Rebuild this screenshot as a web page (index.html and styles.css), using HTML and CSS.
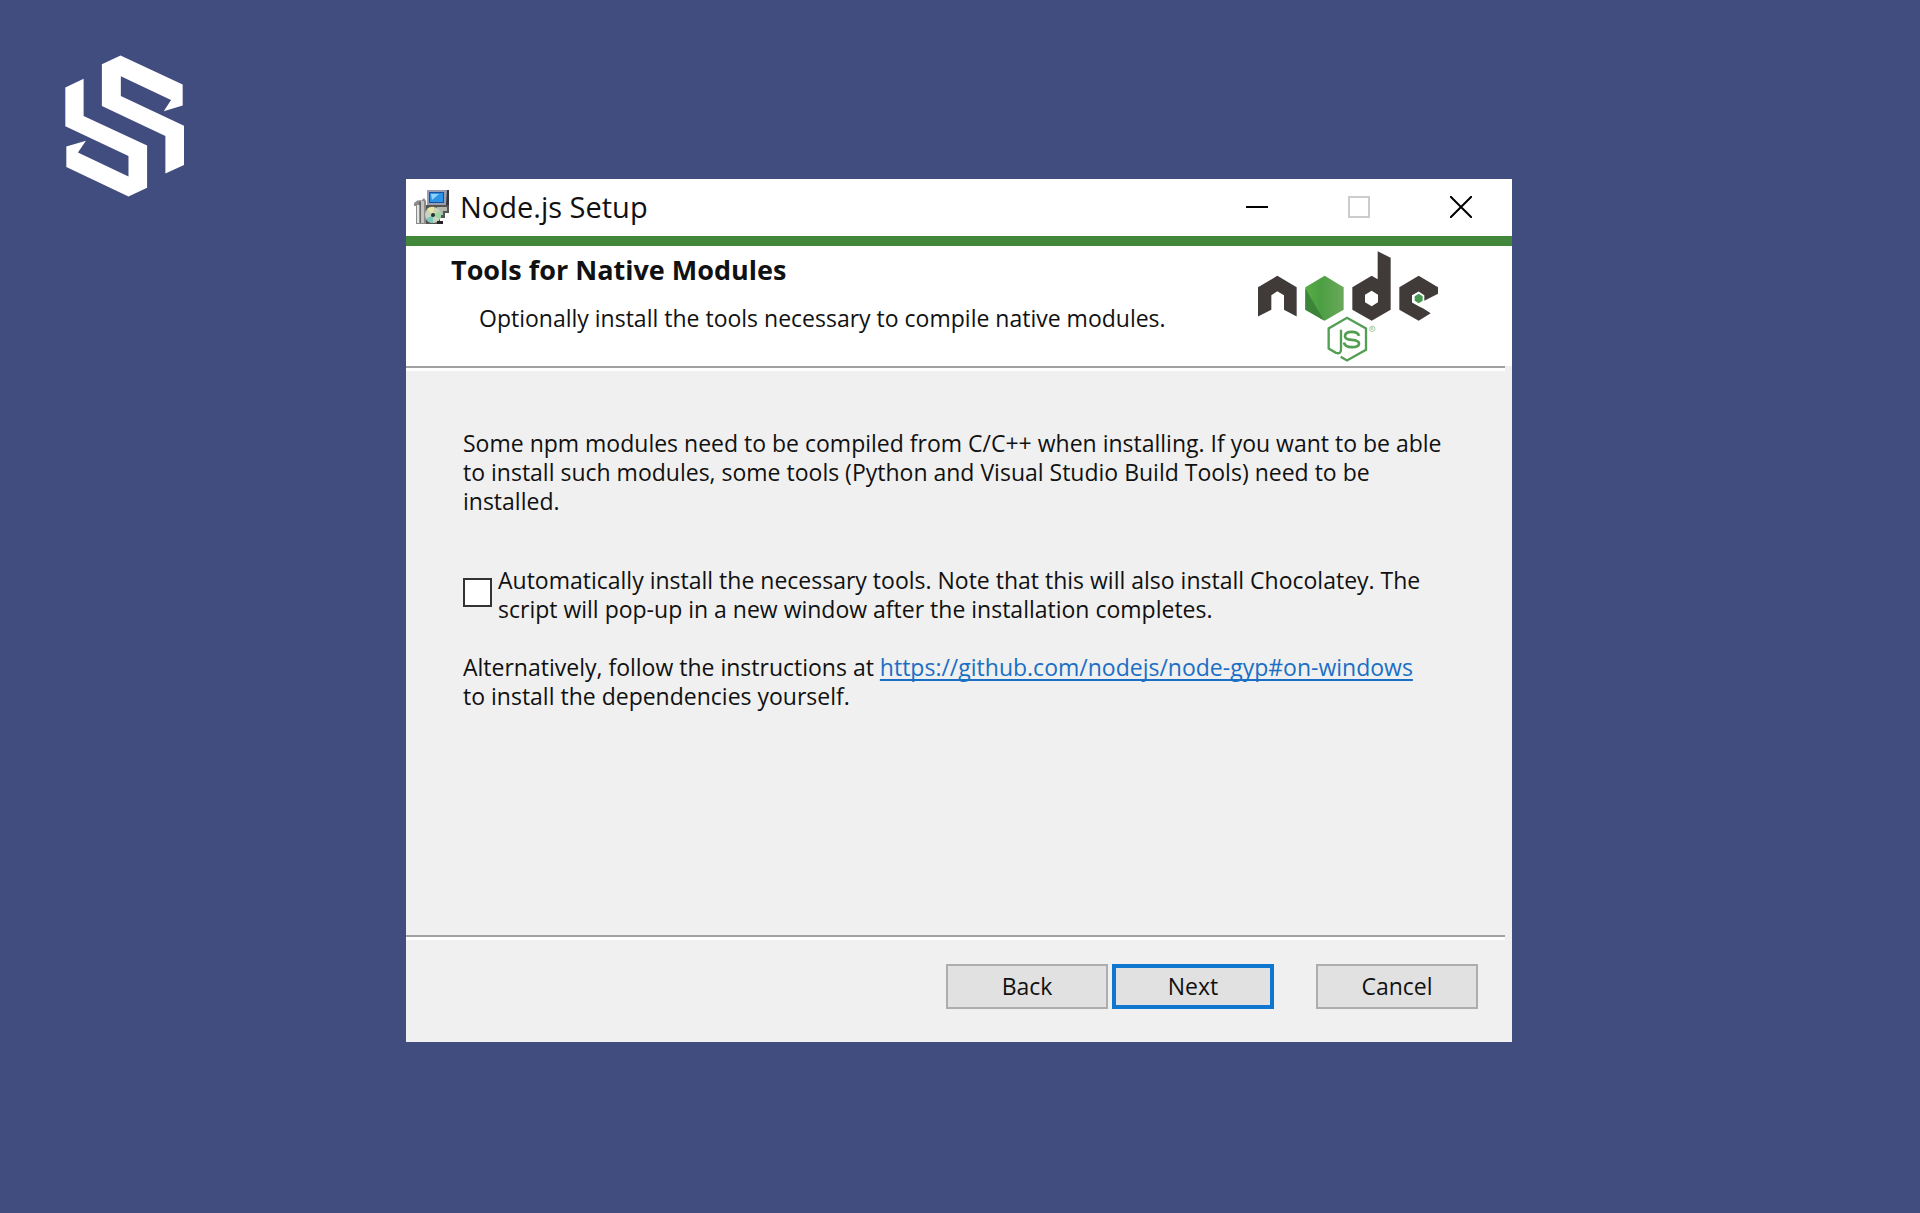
FILE: index.html
```
<!DOCTYPE html>
<html lang="en">
<head>
<meta charset="UTF-8">
<title>Node.js Setup</title>
<link rel="stylesheet" href="styles.css">
</head>
<body>
<svg class="brand" viewBox="44 46 358 426" role="img" aria-label="Logo">
	<path d="M211 47L398 134V197L341 215L363 181L212 109V169L402 258V376L346 402V289L155 199V73Z"/>
	<path d="M100 117V229L291 318V445L235 471L48 382V321L107 303L83 339L235 411V349L45 260V143Z"/>
</svg>
<main class="window">
	<div class="titlebar">
		<svg class="app-icon" viewBox="0 0 36 36" aria-hidden="true">
			<path d="M1 14L5 11L7 13L11 9L13 12V35H3V17H1Z" fill="#8b8b8b"/>
			<path d="M4 16H7V34H4Z" fill="#e4e4e4"/>
			<path d="M8 12H11V34H8Z" fill="#c3c3bd"/>
			<path d="M7 11V34" stroke="#454545"/>
			<path d="M14 1H35V16H14Z" fill="#9b9eb0"/>
			<path d="M34 1H36V17H33Z" fill="#34343a"/>
			<path d="M16 3H31V14H16Z" fill="#1c4f9c"/>
			<path d="M17 4H30V13H17Z" fill="#2b94e6"/>
			<path d="M18 5H26L19 11Z" fill="#8fd4fa"/>
			<path d="M13 16H36V24H32V29H27V35H13Z" fill="#55564f"/>
			<path d="M24 18H34V22H30V26H25Z" fill="#b7b7b2"/>
			<circle cx="20" cy="26" r="8" fill="#c9d2bd"/>
			<path d="M20 26L14 20A8 8 0 0 1 21 18Z" fill="#e9e7a4"/>
			<path d="M20 26L27 22A8 8 0 0 1 27 30Z" fill="#9bd6a4"/>
			<path d="M20 26L13 30A8 8 0 0 0 20 34Z" fill="#7cc8bd"/>
			<circle cx="20" cy="26" r="2" fill="#26302c"/>
			<path d="M24 32H30V35H24Z" fill="#24262a"/>
		</svg>
		<span class="caption">Node.js Setup</span>
		<div class="controls">
			<button type="button" aria-label="Minimize"><svg viewBox="0 0 22 22"><path d="M0 11H22"/></svg></button>
			<button type="button" aria-label="Maximize" disabled><svg viewBox="0 0 22 22"><path d="M1 1H21V21H1Z"/></svg></button>
			<button type="button" aria-label="Close"><svg viewBox="0 0 22 22"><path d="M0 0L22 22M22 0L0 22"/></svg></button>
		</div>
	</div>
	<header class="banner">
		<div>
			<h1>Tools for Native Modules</h1>
			<p>Optionally install the tools necessary to compile native modules.</p>
		</div>
		<svg class="node-logo" viewBox="54 32 540 332" role="img" aria-label="Node.js">
			<defs>
				<linearGradient id="leaf" x1="0" y1="0" x2="1" y2="0">
					<stop offset="0" stop-color="#56ad45"/>
					<stop offset="0.4" stop-color="#4c9f42"/>
					<stop offset="1" stop-color="#6aa85c"/>
				</linearGradient>
			</defs>
			<g fill="#403a39">
				<path d="M112 106L170 140V228L132 208V164L112 152L94 164V208L54 228V140Z"/>
				<path fill-rule="evenodd" d="M413 32L452 52V208L395 241L337 208V140L395 106L413 116ZM395 151L375 163V185L395 197L414 185V163Z"/>
				<path d="M536 106L594 140V160L553 181V164L536 153L516 164V186L536 197L550 204L572 218L536 241L478 208V140Z"/>
			</g>
			<path d="M254 106L311 140V208L254 241L196 208V140Z" fill="url(#leaf)"/>
			<path d="M196 144L252 240L196 208Z" fill="#3c8439"/>
			<path d="M536 160L548 167V181L536 188L524 181V167Z" fill="#469a50"/>
			<path d="M303 268V326Q303 342 288 337L266 324V264L321 232L378 264V328L321 360L302 349" fill="none" stroke="#529e53" stroke-width="7"/>
			<path d="M357 286Q354 274 335 274Q315 274 315 287Q315 297 335 298Q357 300 357 309Q357 320 336 320Q314 320 312 306" fill="none" stroke="#529e53" stroke-width="8"/>
			<circle cx="397" cy="265" r="8" fill="none" stroke="#a9cba8" stroke-width="3"/>
			<path d="M394 269V261H399V265H395L400 269" fill="none" stroke="#a9cba8" stroke-width="2"/>
		</svg>
	</header>
	<hr>
	<section class="content">
		<p>Some npm modules need to be compiled from C/C++ when installing. If you want to be able<br>to install such modules, some tools (Python and Visual Studio Build Tools) need to be<br>installed.</p>
		<div class="option">
			<input type="checkbox" id="autoInstall">
			<label for="autoInstall">Automatically install the necessary tools. Note that this will also install Chocolatey. The<br>script will pop-up in a new window after the installation completes.</label>
		</div>
		<p>Alternatively, follow the instructions at <a href="https://github.com/nodejs/node-gyp#on-windows">https://github.com/nodejs/node-gyp#on-windows</a><br>to install the dependencies yourself.</p>
	</section>
	<hr>
	<footer class="actions">
		<button type="button">Back</button>
		<button type="button" class="default">Next</button>
		<button type="button" class="cancel">Cancel</button>
	</footer>
</main>
</body>
</html>
```

FILE: styles.css
```
* {
	box-sizing: border-box;
}
body {
	margin: 0;
	min-height: 100vh;
	padding: 179px 26px 24px 24px;
	background: #424d7f;
	color: #111;
	font: 23px/29px "Open Sans", "Noto Sans", sans-serif;
}
h1,
p {
	margin: 0;
}
button {
	font: inherit;
	color: inherit;
}
/* etched separator: grey line with a white one under it */
hr {
	height: 5px;
	margin: 0 7px 0 0;
	border: 0;
	border-top: 2px solid #a0a0a0;
	background: #fff;
}

/* corner logo, floats over the backdrop */
.brand {
	position: absolute;
	top: 55px;
	left: 65px;
	width: 119px;
	height: 142px;
	fill: #fff;
}

.window {
	max-width: 1106px;
	margin: 0 auto;
	background: #f0f0f0;
}

.titlebar {
	display: flex;
	align-items: center;
	height: 57px;
	padding: 0 0 2px 7px;
	background: #fff;
}
.app-icon {
	width: 36px;
	height: 36px;
}
.caption {
	margin-left: 11px;
	font-size: 29px;
}
.controls {
	display: flex;
	align-self: stretch;
	margin-left: auto;
}
.controls button {
	display: flex;
	align-items: center;
	justify-content: center;
	width: 102px;
	padding: 0;
	border: 0;
	background: none;
}
.controls svg {
	width: 22px;
	height: 22px;
	fill: none;
	stroke: #000;
	stroke-width: 2;
}
.controls button:disabled svg {
	stroke: #ccc;
}

.banner {
	display: flex;
	justify-content: space-between;
	height: 130px;
	padding: 5px 74px 0 45px;
	border-top: 10px solid #43873a;
	background: #fff;
}
.banner h1 {
	font-size: 27px;
	line-height: 38px;
}
.banner p {
	margin: 15px 0 0 28px;
}
.node-logo {
	flex: none;
	width: 180px;
	height: 111px;
}

.content {
	min-height: 564px;
	padding: 58px 34px 0 57px;
}
.content a {
	color: #1a6fc4;
	text-decoration-thickness: 2px;
	text-underline-offset: 3px;
	text-decoration-skip-ink: none;
}
.option {
	display: flex;
	align-items: flex-start;
	gap: 6px;
	margin-top: 50px;
	margin-bottom: 29px;
}
.option input {
	appearance: none;
	flex: none;
	width: 29px;
	height: 29px;
	margin: 12px 0 0;
	border: 2px solid #333;
	background: #fff;
}
.option input:checked {
	background: #333;
	box-shadow: inset 0 0 0 5px #fff;
}

.actions {
	display: flex;
	justify-content: flex-end;
	gap: 4px;
	padding: 24px 34px 33px 0;
}
.actions button {
	width: 162px;
	height: 45px;
	padding: 0;
	border: 2px solid #adadad;
	background: #e1e1e1;
}
.actions .default {
	border: 4px solid #0f77cf;
}
.actions .cancel {
	margin-left: 38px;
}
```
